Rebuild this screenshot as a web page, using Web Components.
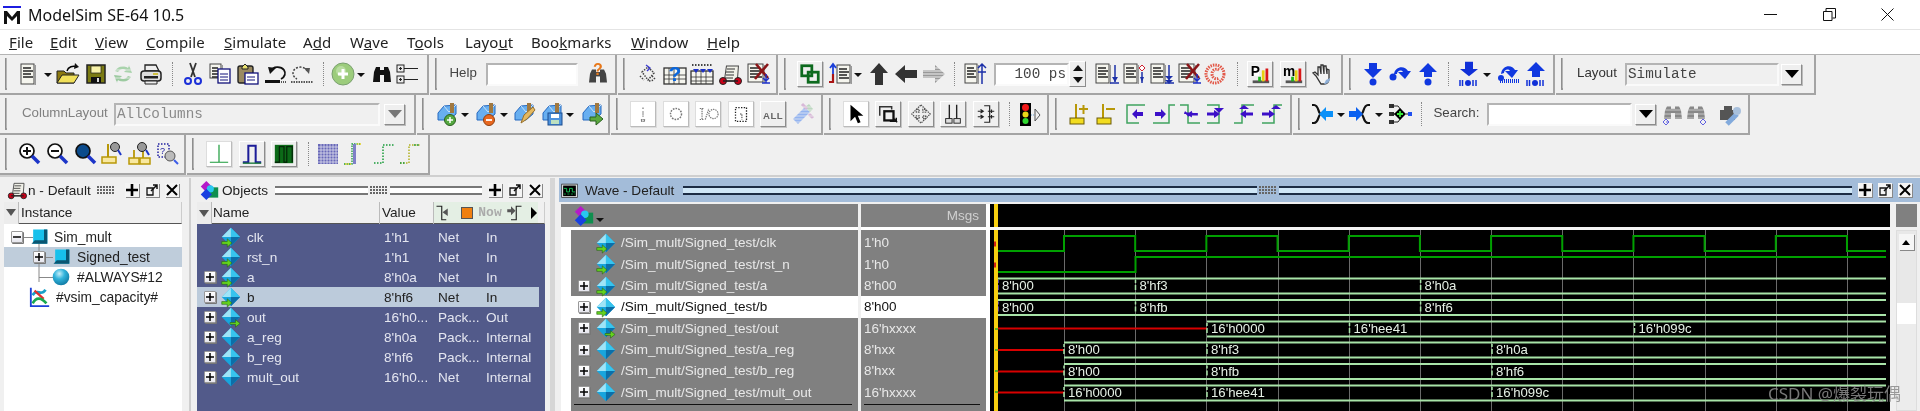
<!DOCTYPE html>
<html><head><meta charset="utf-8"><title>ModelSim</title>
<style>html,body{margin:0;padding:0;background:#f0f0f0;overflow:hidden}</style></head>
<body><ms-app></ms-app>
<script>
const F='"Noto Sans","Open Sans",sans-serif';
const F2='"Liberation Sans",Arial,sans-serif';
const diamond=(a)=>`<polygon points="13,2 23,12 13,22 3,12" fill="#18a5dd"/><polygon points="13,2 13,12 3,12" fill="#9fe4f7"/><polygon points="13,2 23,12 13,12" fill="#37c4ee"/><polygon points="13,22 23,12 13,12" fill="#0c6ea8"/>`+(a==='in'?`<path d="M3 17h6v-3l5 4.500-5 4.500v-3H3z" fill="#64d21e" stroke="#215a10" stroke-width=".6"/>`:a==='out'?`<path d="M12 18h6v-3l5 4-5 4v-3h-6z" fill="#64d21e" stroke="#215a10" stroke-width=".6"/>`:'');
const dbl=(d,c='#000',w=1.4,x='')=>`<path d="${d}" fill="none" stroke="${c}" stroke-width="${w}" ${x}/>`;
const paper=(x=4,y=3,w=12,h=18)=>`<rect x="${x}" y="${y}" width="${w}" height="${h}" fill="#f5f5ee" stroke="#444"/><rect x="${x+w+.5}" y="${y+1}" width="1.5" height="${h}" fill="#999"/><path d="M${x+2} ${y+4}h${w-5}M${x+2} ${y+7}h${w-3}M${x+2} ${y+10}h${w-5}M${x+2} ${y+13}h${w-3}" stroke="#222" stroke-width="1.300"/>`;
const magnify=(c)=>`<circle cx="10" cy="9" r="7" fill="${c}" stroke="#111" stroke-width="1.700"/><path d="M15 14l7 7" stroke="#1c35c8" stroke-width="3.500"/>`;
const edge=(d,a,ac='#3c10c8')=>`<path d="${d}" fill="none" stroke="#3fa35f" stroke-width="1.500"/><path d="${a}" fill="${ac}"/>`;
const stepdown=(c='#1030d8')=>`<path d="M8 1h8v9h5l-9 9-9-9h5z" fill="${c}" transform="translate(0,-1) scale(1 .8)"/>`;
const bars=`<path d="M3 18v6M5.500 18v6M16 18v6M19 18v6" stroke="#1030d8" stroke-width="1.500"/><circle cx="11" cy="21" r="3" fill="#1030d8"/>`;
const folderblue=`<path d="M3 11l6-7 12-1 0 9-7 6-11 0z" fill="#68aff0" stroke="#2568c0"/><path d="M9 4l5 6 7-7" fill="none" stroke="#c8e2fa"/><path d="M15 1h4v10h-4z" fill="#a07840"/>`;
const binocs=(c='#333',x='')=>`<g fill="${c}" ${x}><path d="M3 20l1-10 2-5h4v15zM14 5h4l2 5 1 10h-7z"/><rect x="10" y="8" width="4" height="5"/></g>`;
const I={
doc:paper(5,2,13,20),
open:`<path d="M1 21V9h7l2 2h8v10z" fill="#8d7a10" stroke="#222"/><path d="M1 21l5-8h17l-5 8z" fill="#f1e05a" stroke="#222"/>`+dbl('M11 9c1-4 6-6 10-4')+`<path d="M19 1l4 4-5 2z" fill="#111"/>`,
save:`<rect x="3" y="3" width="18" height="18" fill="#7b7b12" stroke="#222" stroke-width="1.500"/><rect x="7" y="4" width="10" height="7" fill="#f7f2a8" stroke="#222" stroke-width=".7"/><rect x="7" y="15" width="10" height="6" fill="#111"/><rect x="13" y="16" width="2" height="4" fill="#ddd"/>`,
refresh:`<path d="M4 9c3-5 9-6 13-3l1-3 3 8-8-1 2-2c-3-2-6-1-8 2z" fill="#a9d3ac"/><path d="M20 15c-3 5-9 6-13 3l-1 3-3-8 8 1-2 2c3 2 6 1 8-2z" fill="#9ccaa0"/><path d="M2 4h20M2 8h20M2 12h20M2 16h20M2 20h20" stroke="#f0f0f0" stroke-width=".8"/>`,
print:`<path d="M6 9V3h11l3 6z" fill="#eee" stroke="#222" stroke-width="1.300"/><rect x="2" y="9" width="20" height="10" rx="3" fill="#ddd" stroke="#222" stroke-width="1.500"/><rect x="5" y="14" width="14" height="2.500" fill="#222"/><rect x="14" y="11" width="5" height="2" fill="#d0c040"/><path d="M6 19h12v3H6z" fill="#eee" stroke="#222"/>`,
cut:`<path d="M9 1l5 14M15 1l-5 14" stroke="#333" stroke-width="1.800"/><circle cx="7" cy="19" r="3" fill="none" stroke="#1c30d8" stroke-width="2"/><circle cx="17" cy="19" r="3" fill="none" stroke="#1c30d8" stroke-width="2"/>`,
copy:paper(2,2,11,14)+`<rect x="10" y="7" width="12" height="14" fill="#fff" stroke="#12127a" stroke-width="1.300"/><path d="M12 12h8M12 15h8M12 18h8" stroke="#12127a"/>`,
paste:`<rect x="3" y="4" width="15" height="17" rx="2" fill="#9a8a60" stroke="#222" stroke-width="1.400"/><path d="M7 5l3-3 3 3v2H7z" fill="#e8e070" stroke="#222"/><rect x="10" y="11" width="13" height="11" fill="#fff" stroke="#12127a" stroke-width="1.300"/><path d="M12 15h8M12 18h8" stroke="#12127a"/>`,
undo:dbl('M7 9c2-5 10-5 13-1 2 3 1 7-3 9',"#111",1.800)+`<path d="M4 5l8 1-6 6z" fill="#111"/><rect x="1" y="18" width="15" height="3" fill="#111"/><path d="M17 20h6" stroke="#555" stroke-width="2" stroke-dasharray="1 1"/>`,
redo:dbl('M17 9c-2-5-10-5-13-1-2 3-1 7 3 9',"#444",1.500,'stroke-dasharray="2 1.500"')+`<path d="M20 6l-6 0 5 6z" fill="#555"/><path d="M1 20h22" stroke="#555" stroke-width="2" stroke-dasharray="1.500 1"/>`,
simadd:`<circle cx="12" cy="12" r="11" fill="#9ccc7c" stroke="#7aa070"/><circle cx="10" cy="9" r="5" fill="#b8dca0"/><path d="M12 7v10M7 12h10" stroke="#fff" stroke-width="3"/>`,
binoc:binocs('#111'),
tree:`<rect x="1" y="3" width="7" height="7" fill="#eee" stroke="#222"/><rect x="1" y="14" width="7" height="7" fill="#eee" stroke="#222"/><path d="M3 6.500h3M3 17.500h3M4.500 5v3M4.500 16v3M8 6.500h14M8 17.500h14" stroke="#222" stroke-width="1.200"/>`,
helpq:binocs('#444','transform="translate(0,3) scale(1 .88)"')+`<text x="7" y="13" font-family="Liberation Sans" font-weight="700" font-size="16" fill="#e8781a">?</text>`,
stepdots:`<g fill="none" stroke="#444" stroke-dasharray="1.500 1.200" stroke-width="1.500"><path d="M6 10l6-5 6 6-6 7z"/><path d="M4 14l4 4M13 19l5-1M16 14l3 3"/></g><path d="M10 3l4 3-3 3" stroke="#3c3cd0" stroke-width="1.400" fill="none"/>`,
cal:`<rect x="1" y="6" width="22" height="16" fill="#f5f5ee" stroke="#333" stroke-width="1.300"/><path d="M1 13h22M1 17h22M6 6v16M11 6v16M16 6v16" stroke="#333" stroke-width=".8"/><text x="12" y="19" text-anchor="middle" font-family="Liberation Sans" font-weight="700" font-size="21" fill="#0a66dc">?</text>`,
cal2:`<rect x="1" y="9" width="22" height="13" fill="#f5f5ee" stroke="#333" stroke-width="1.300"/><path d="M1 15h22M1 19h22M6 9v13M11 9v13M16 9v13" stroke="#333" stroke-width=".8"/><path d="M3 7l3 4 3-4zM10 7l3 4 3-4zM17 7l3 4 3-4z" fill="#1c30c8"/><path d="M2 3h20" stroke="#444" stroke-width="2" stroke-dasharray="1.500 1.500"/>`,
cart:`<path d="M6 4h12l1 15H6z" fill="#f0f0e8" stroke="#444" transform="skewX(-8) translate(3)"/><path d="M9 7h8M8 10h8M8 13h8M7 16h8" stroke="#333"/><circle cx="5" cy="19" r="3.500" fill="#c80018" stroke="#222"/><circle cx="20" cy="19" r="3.500" fill="#c80018" stroke="#222"/><path d="M5 19h15" stroke="#222" stroke-width="1.500"/>`,
delx:paper(2,2,15,18)+`<path d="M10 2l12 14M22 2L9 17" stroke="#8a1518" stroke-width="2.600"/><path d="M20 12v9M16 21h8M17 16l3 3 3-3" stroke="#1c30c8" stroke-width="1.400" fill="none"/>`,
link:`<rect x="3" y="3" width="11" height="11" fill="none" stroke="#0d6a1e" stroke-width="3"/><rect x="10" y="10" width="11" height="11" fill="none" stroke="#0d6a1e" stroke-width="3"/>`,
updown:paper(9,3,13,18)+`<path d="M5 3v9M2 6l3-4 3 4" fill="none" stroke="#1c40d8" stroke-width="1.800"/><path d="M5 12v8H1" fill="none" stroke="#aa1515" stroke-width="2.200"/>`,
up:`<path d="M12 1l9 10h-5v12H8V11H3z" fill="#333"/>`,
left:`<path d="M1 12l10-9v5h12v8H11v5z" fill="#333"/>`,
right:`<path d="M23 12L13 3v5H1v8h12v5z" fill="#999"/><path d="M1 6h22M1 9h22M1 12h22M1 15h22M1 18h22" stroke="#f0f0f0"/>`,
wu:paper(2,2,12,19)+`<path d="M19 22V3M15 6l4-4 4 4M15 10h8" fill="none" stroke="#1c30a8" stroke-width="1.500"/>`,
w1:paper(1,2,13,19)+`<path d="M20 3v17M15 21h9" stroke="#1c30a8" stroke-width="1.500"/><path d="M17 15l3 5 3-5z" fill="#1c30a8"/>`,
w2:paper(1,2,13,19)+`<path d="M19 10v11" stroke="#1c30a8" stroke-width="1.500"/><path d="M17 15l2 5 2-5z" fill="#1c30a8"/><path d="M19 3l3 3-3 3-3-3z" fill="#fff" stroke="#d02030"/>`,
w3:paper(1,2,13,19)+`<path d="M19 3v15M15 21h9" stroke="#1c30a8" stroke-width="1.500"/><path d="M15 14l4 4 4-4zM15 18l4 4 4-4z" fill="#1c30a8"/>`,
redc:`<g fill="none" stroke="#e25848" stroke-width="3" stroke-dasharray="1.500 1"><circle cx="12" cy="12" r="9"/><path d="M16 8c-3-2-7 0-7 4s4 6 7 4"/></g>`,
prof:`<rect x="4" y="19" width="18" height="3" fill="#555"/><path d="M3 3h8v11H3z" fill="#fff"/><text x="2" y="14" font-family="Liberation Sans" font-weight="700" font-size="15" fill="#000">P</text><rect x="10" y="15" width="3" height="5" fill="#1cb41c"/><rect x="14" y="8" width="3" height="12" fill="#e8d010"/><rect x="18" y="6" width="3" height="14" fill="#d81818"/>`,
prom:`<rect x="4" y="19" width="18" height="3" fill="#555"/><text x="1" y="14" font-family="Liberation Sans" font-weight="700" font-size="15" fill="#000">m</text><rect x="10" y="15" width="3" height="5" fill="#1cb41c"/><rect x="14" y="8" width="3" height="12" fill="#e8d010"/><rect x="18" y="6" width="3" height="14" fill="#d81818"/>`,
handi:`<path d="M6 14l-3-3 2-1 3 3V5l2 0 1 7V3l2 0 1 9V4l2 0 1 8V7l2 1v8c0 4-2 6-5 6h-3z" fill="#f3f3f3" stroke="#333" stroke-width="1.300"/><path d="M14 22c3 0 6-2 6-6l-4 2z" fill="#8fb0d8"/>`,
sdown:`<path d="M8 1h8v6h5l-9 9-9-9h5z" fill="#1038e0"/><circle cx="12" cy="20" r="3.500" fill="#1038e0"/>`,
sover:`<path d="M6 12C7 4 17 3 20 9h3l-6 8-7-7h5c-2-3-6-1-6 2z" fill="#1038e0"/><circle cx="5" cy="15" r="3.500" fill="#1038e0"/>`,
sup:`<path d="M12 1l9 9h-5v5H8v-5H3z" fill="#1038e0"/><circle cx="12" cy="20" r="3.500" fill="#1038e0"/>`,
sdownb:stepdown()+bars,
soverb:`<path d="M5 12C6 3 16 2 19 8h3l-6 8-7-7h5c-2-3-6-1-6 2z" fill="#1038e0"/><circle cx="5" cy="16" r="3" fill="#1038e0"/><path d="M4 19h20" stroke="#1038e0" stroke-width="4" stroke-dasharray="1 1"/>`,
supb:`<path d="M12 0l9 9h-5v6H8V9H3z" fill="#1038e0"/>`+bars,
wadd:folderblue+`<circle cx="15" cy="18" r="5.500" fill="#55a840" stroke="#2a6020"/><path d="M15 15v6M12 18h6" stroke="#fff" stroke-width="1.500"/>`,
wsub:folderblue+`<circle cx="15" cy="18" r="5.500" fill="#e86820" stroke="#904010"/><path d="M12 18h6" stroke="#fff" stroke-width="1.800"/>`,
wedit:folderblue+`<path d="M9 21l3-8 9-8 2 3-8 9z" fill="#e4b860" stroke="#98702c"/>`,
wsave:folderblue+`<rect x="8" y="11" width="14" height="12" fill="#4d92dc" stroke="#1a4c90"/><rect x="11" y="12" width="8" height="4" fill="#fff"/><rect x="11" y="18" width="8" height="4" fill="#bde0c0"/>`,
wgo:folderblue+`<path d="M10 15h6v-4l7 6-7 6v-4h-6z" fill="#5ba83e" stroke="#2a6020"/>`,
t_i:`<path d="M12 5v2M12 9v6M10 18h4M10 20h4M10 18l1 2M14 18l-1 2" stroke="#777" stroke-width="1.300" stroke-dasharray="1.500 .8"/>`,
t_o:`<circle cx="12" cy="12" r="6" fill="none" stroke="#777" stroke-width="1.600" stroke-dasharray="1.800 1.200"/>`,
t_io:`<g fill="none" stroke="#777" stroke-width="1.300" stroke-dasharray="1.500 1"><path d="M3 6h5M5.500 6v12M3 18h5M9 18l4-12"/><circle cx="18" cy="12" r="5"/></g>`,
t_b:`<path d="M6 5h12v15H6z" fill="none" stroke="#222" stroke-width="1.400" stroke-dasharray="1.500 1.500"/><path d="M11 12h2v6" fill="none" stroke="#222" stroke-dasharray="1.500 1"/>`,
t_all:`<text x="12" y="17" text-anchor="middle" font-family="Liberation Sans" font-weight="700" font-size="10.500" fill="#666" letter-spacing=".4">ALL</text>`,
t_tool:`<path d="M2 17l12-12 5 5-12 12z" fill="#94b4f0"/><path d="M14 5l4-3 4 5-3 3z" fill="#bcd8c0"/><path d="M11 2l5 5M18 12l4 4" stroke="#d8b8d8" stroke-width="3"/><path d="M1 5h23M1 8h23M1 11h23M1 14h23M1 17h23M1 20h23" stroke="#f0f0f0" stroke-width=".7"/>`,
arrowc:`<path d="M6 2v18l5-5 3 7 3-1-3-7h6z" fill="#000"/>`,
zoomr:`<path d="M3 14V4h13v3" fill="none" stroke="#333" stroke-width="1.600"/><rect x="8" y="9" width="10" height="10" fill="none" stroke="#111" stroke-width="2.500"/><path d="M14 20l7 0 0-4M18 17l4 4" stroke="#111" stroke-width="1.600" fill="none"/>`,
move:`<g fill="none" stroke="#555" stroke-width="1.400" stroke-dasharray="1.500 1"><path d="M12 2l5 5h-3v3h3V7l5 5-5 5v-3h-3v3h3l-5 5-5-5h3v-3H7v3l-5-5 5-5v3h3V7H7z"/></g>`,
cur2:`<path d="M8 2v16M16 2v16" stroke="#222" stroke-width="1.500"/><rect x="4" y="17" width="7" height="5" fill="#ddd" stroke="#222"/><rect x="13" y="17" width="7" height="5" fill="#ddd" stroke="#222"/>`,
lanes:`<path d="M10 3h6v18h-6" fill="none" stroke="#222" stroke-width="1.300"/><path d="M3 9h6M3 15h6M6 7l3 2-3 2M6 13l3 2-3 2M14 9h7M14 15h7M18 7v4M18 13v4" stroke="#222" stroke-width="1.300" fill="none"/>`,
traffic:`<rect x="3" y="1" width="11" height="23" fill="#000"/><circle cx="8.500" cy="5.500" r="3.500" fill="#f01818"/><circle cx="8.500" cy="12.500" r="3" fill="#e8d818"/><circle cx="8.500" cy="19" r="3" fill="#30d830"/><path d="M18 7l5 6-5 6z" fill="#f0f0f0" stroke="#555"/><path d="M14 13h4" stroke="#6aa0d0" stroke-dasharray="1 1"/>`,
c_add:`<path d="M8 2v15M3 20h11" stroke="#b89808" stroke-width="2"/><rect x="2" y="16" width="14" height="6" fill="#f2dc20" stroke="#6a5a08"/><path d="M11 7h9M15.500 3v9" stroke="#b89808" stroke-width="2"/>`,
c_sub:`<path d="M8 2v15" stroke="#b89808" stroke-width="2"/><rect x="2" y="16" width="14" height="6" fill="#f2dc20" stroke="#6a5a08"/><path d="M11 7h9" stroke="#b89808" stroke-width="2"/>`,
e1:edge('M22 3H4v18h12','M9 12l5-5v3h6v4h-6v3z'),
e2:edge('M2 21h16V3h6','M15 12l-5-5v3H4v4h6v3z'),
e3:edge('M2 3h8v18h12','M6 12h4l-3-3z')+`<path d="M8 12l6-4v2.500h7v3h-7v2.500zM5 10h10l-5 5z" fill="#3c10c8" transform="translate(2,2) scale(.85)"/>`,
e4:edge('M2 21h12V3H2','M2 10.500h7V8l6 4-6 4v-2.500H2z')+`<path d="M9 3h10l-5 5z" fill="#3c10c8" transform="translate(0,3)"/>`,
e5:edge('M2 21h8V3h12','M21 10.500h-7V8l-6 4 6 4v-2.500h7z')+`<path d="M5 5l5-4 5 4z" fill="#3c10c8" transform="translate(2,2)"/>`,
e6:edge('M2 21h12V3h8','M2 10.500h7V8l6 4-6 4v-2.500H2z')+`<path d="M9 5l5-4 5 4z" fill="#3c10c8" transform="translate(2,2)"/>`,
out1:dbl('M2 3h2c5 0 4 9 7 9-3 0-2 9-7 9H2',"#111",2.200)+`<path d="M23 9v6h-7v4l-7-7 7-7v4z" fill="#0a90f8"/>`,
in1:dbl('M22 3h-2c-5 0-4 9-7 9 3 0 2 9 7 9h2',"#111",2.200)+`<path d="M1 9v6h7v4l7-7-7-7v4z" fill="#0a60f0"/>`,
nets:`<rect x="1" y="2" width="5" height="4" fill="#333"/><rect x="1" y="10" width="5" height="4" fill="#333"/><rect x="1" y="18" width="5" height="4" fill="#333"/><path d="M4 4h6l3 4M4 12h3M4 20h6l3-4M18 12h3" stroke="#222" fill="none"/><path d="M12 6l6 6-6 6-6-6z" fill="#000"/><path d="M12 9v6M9 12h6" stroke="#38e838" stroke-width="1.800"/><rect x="20" y="10" width="4" height="4" fill="#2050f0"/>`,
bfind1:binocs('#888','transform="scale(1 .85)"')+`<path d="M0 12h24M0 8h24M0 4h24M0 16h24" stroke="#f0f0f0" stroke-width=".6"/><path d="M2 20l3-3 3 3-3 3zM8 20h-3" fill="none" stroke="#6060e0"/>`,
bfind2:binocs('#888','transform="scale(1 .85)"')+`<path d="M0 12h24M0 8h24M0 4h24M0 16h24" stroke="#f0f0f0" stroke-width=".6"/><path d="M16 20l3-3 3 3-3 3z" fill="none" stroke="#6060e0"/>`,
gear:`<path d="M3 8h4V4h8v4h3v10H3z" fill="#555"/><path d="M10 22l10-10" stroke="#82aadc" stroke-width="5"/><circle cx="20" cy="9" r="4" fill="#a8c0dc"/>`,
z_in:magnify('#fff')+`<path d="M6 9h8M10 5v8" stroke="#111" stroke-width="2"/>`,
z_out:magnify('#fff')+`<path d="M6 9h8" stroke="#111" stroke-width="2"/>`,
z_full:magnify('#0b4b8c'),
cz1:`<path d="M8 2v13" stroke="#b89808" stroke-width="2"/><rect x="2" y="15" width="14" height="6" fill="#f8e8a0" stroke="#b89808" stroke-width="1.500"/><circle cx="15" cy="5" r="4.500" fill="#999" stroke="#222"/><path d="M18 8l3 5" stroke="#1c35c8" stroke-width="2"/>`,
cz2:`<path d="M6 8v8M15 4v12" stroke="#b89808" stroke-width="1.800"/><rect x="1" y="16" width="10" height="6" fill="#f8e8a0" stroke="#b89808" stroke-width="1.500"/><rect x="12" y="16" width="10" height="6" fill="#f8e8a0" stroke="#b89808" stroke-width="1.500"/><circle cx="14" cy="5" r="4.500" fill="#999" stroke="#222"/><path d="M18 8l3 5" stroke="#1c35c8" stroke-width="2"/>`,
cz3:`<path d="M2 2h11v13H2z" fill="none" stroke="#2020a0" stroke-width="1.500" stroke-dasharray="1.500 1.500"/><circle cx="14" cy="14" r="5" fill="#bbb" stroke="#555"/><path d="M18 18l4 4" stroke="#3c5ce8" stroke-width="2"/><text x="4" y="12" font-family="Liberation Sans" font-size="9" fill="#2020a0">?</text>`,
w_a:`<path d="M2 21h20M12 21V2" stroke="#1a9a3a" stroke-width="1.300" fill="none"/>`,
w_b:`<path d="M2 21h6V3h8v18h6" stroke="#1c1c98" stroke-width="2.200" fill="none"/><path d="M2 22h20" stroke="#1a7a3a" stroke-width="1.500"/>`,
w_c:`<rect x="2" y="2" width="20" height="20" fill="#0c6a18"/><path d="M2 21h5V4h5v17h3V4h6v17" stroke="#042a08" stroke-width="1.400" fill="none"/>`,
w_d:`<rect x="2" y="2" width="20" height="20" fill="#6868b8"/><path d="M2 5h20M2 8h20M2 11h20M2 14h20M2 17h20M2 20h20M5 2v20M8 2v20M11 2v20M14 2v20M17 2v20M20 2v20" stroke="#eeeef4" stroke-width=".7"/>`,
w_e:`<path d="M1 22h8V2h8" fill="none" stroke="#1a9a3a" stroke-dasharray="1.500 1" stroke-width="1.300"/><path d="M10 2h3v20h-3z" fill="#8080c8"/><path d="M2 22h6M14 2h5" stroke="#e0d020" stroke-width="1.500" stroke-dasharray="1.500 1"/>`,
w_f:`<path d="M2 21h9V3h11" fill="none" stroke="#1a9a3a" stroke-width="1.500" stroke-dasharray="1.500 1.500"/>`,
w_g:`<path d="M2 21h9V3h11" fill="none" stroke="#b0b020" stroke-width="1.500" stroke-dasharray="1.500 1.500"/><path d="M2 21h6M16 3h6" stroke="#1a9a3a" stroke-width="1.500" stroke-dasharray="1.500 1.500"/>`,
objs:`<rect x="3" y="2" width="10" height="10" fill="#b51ac8" transform="rotate(45 8 7)"/><rect x="9" y="8" width="14" height="13" fill="#0f8f4f"/><circle cx="13" cy="10" r="4.500" fill="#28c8f0"/><rect x="3" y="12" width="10" height="10" fill="#1840e0" transform="rotate(45 8 17)"/>`,
wavei:`<rect x="1" y="3" width="22" height="19" fill="#e8e8e8" stroke="#222"/><rect x="3" y="5" width="18" height="15" fill="#000"/><path d="M4 9h4v5h4V9h4v5h4" fill="none" stroke="#18c858" stroke-width="1.300"/><path d="M4 17h16" stroke="#18c858" stroke-dasharray="3 2"/>`,
cube:`<rect x="5" y="3" width="17" height="17" fill="#17c1ec"/><path d="M22 3v17H3l4-4h11V3z" fill="#0a5672"/>`,
sphere:`<circle cx="12" cy="12" r="10" fill="url(#sg)"/>`,
cap:`<path d="M2 2v20h20" stroke="#1c40d8" stroke-width="2" fill="none"/><path d="M4 10c5-8 9 2 14-6" stroke="#18a0c8" stroke-width="3" fill="none"/><path d="M6 5l10 9" stroke="#e03030" stroke-width="2.500"/><path d="M4 19c4-8 10-6 15 0" stroke="#18a850" stroke-width="3" fill="none"/>`,
sig:diamond(),sigin:diamond('in'),sigout:diamond('out')
};
function def(n,c){customElements.define(n,c)}
class Base extends HTMLElement{constructor(){super();this.attachShadow({mode:'open'})}}
def('ms-icon',class extends Base{connectedCallback(){const n=this.getAttribute('name'),s=+this.getAttribute('size')||24;
 this.shadowRoot.innerHTML=`<style>:host{display:inline-flex;align-items:center;justify-content:center;flex:none;box-sizing:border-box}
 svg{display:block;overflow:visible}
 :host([look=btn]){width:26px;height:26px;background:#efefef;border:1px solid;border-color:#fff #8c8c8c #8c8c8c #fff;box-shadow:1px 1px 0 #c4c4c4}
 :host([look=white]){width:26px;height:26px;background:#fff;border:1px solid;border-color:#ddd #bbb #bbb #ddd;box-shadow:1px 1px 0 #ddd}
 </style><svg width="${s}" height="${s}" viewBox="0 0 24 24"><defs><radialGradient id="sg" cx=".4" cy=".3" r=".8"><stop offset="0" stop-color="#c8eef8"/><stop offset=".4" stop-color="#32b4dc"/><stop offset="1" stop-color="#0a6e98"/></radialGradient></defs>${I[n]||''}</svg>`}});
def('ms-drop',class extends Base{constructor(){super();this.shadowRoot.innerHTML=`<style>:host{display:block;flex:none;width:0;height:0;border:4px solid transparent;border-top:4px solid #111;border-bottom:0;margin-top:2px}</style>`}});
def('ms-sep',class extends Base{constructor(){super();this.shadowRoot.innerHTML=`<style>:host{display:block;flex:none;width:0;height:24px;border-left:1.500px dotted #888}</style>`}});
def('ms-grip',class extends Base{constructor(){super();this.shadowRoot.innerHTML=`<style>:host{display:block;flex:none;width:2px;height:32px;margin-left:5px;background:#b4b4b4;border-left:1px solid #8e8e8e;border-bottom:2px solid #999;box-sizing:border-box}</style>`}});
def('ms-group',class extends Base{constructor(){super();this.shadowRoot.innerHTML=`<style>:host{display:flex;align-items:center;flex:none;box-sizing:border-box;height:100%;border-right:2px solid #a4a4a4;border-bottom:2px solid #a4a4a4;margin-right:1px;font:13.500px ${F2};color:#444}</style><slot></slot>`}});
def('ms-row',class extends Base{constructor(){super();this.shadowRoot.innerHTML=`<style>:host{display:flex;height:40px}</style><slot></slot>`}});
def('ms-label',class extends Base{constructor(){super();this.shadowRoot.innerHTML=`<style>:host{display:block;flex:none;white-space:nowrap;font:13.300px ${F2};line-height:20px;margin-top:-3px}</style><slot></slot>`}});
def('ms-field',class extends Base{connectedCallback(){const c=this.getAttribute('bg')||'#fff';this.shadowRoot.innerHTML=`<style>:host{display:flex;align-items:center;flex:none;box-sizing:border-box;height:23px;background:${c};border:2px solid;border-color:#b4b4b4 #fafafa #fafafa #b4b4b4;font:14.300px "Liberation Mono",monospace;padding:0 1px;white-space:nowrap;overflow:hidden}</style><slot></slot>`}});
def('ms-combo-btn',class extends Base{constructor(){super();this.shadowRoot.innerHTML=`<style>:host{display:flex;align-items:center;justify-content:center;flex:none;box-sizing:border-box;width:21px;height:21px;background:#efefef;border:1px solid;border-color:#fff #8c8c8c #8c8c8c #fff;box-shadow:1px 1px 0 #bbb}
 i{display:block;width:0;height:0;border:7px solid transparent;border-top:8px solid #000;border-bottom:0}:host([off]) i{border-top-color:#777}</style><i></i>`}});
def('ms-spin',class extends Base{constructor(){super();this.shadowRoot.innerHTML=`<style>:host{display:flex;flex-direction:column;flex:none;width:17px;height:26px;box-sizing:border-box;border:1px solid;border-color:#fff #8c8c8c #8c8c8c #fff;background:#efefef;align-items:center;justify-content:space-around}
 i{display:block;width:0;height:0;border:5px solid transparent}i.u{border-bottom:6px solid #111;border-top:0}i.d{border-top:6px solid #111;border-bottom:0}</style><i class="u"></i><i class="d"></i>`}});
def('ms-titlebar',class extends Base{constructor(){super();this.shadowRoot.innerHTML=`<style>:host{display:flex;align-items:center;height:29px;background:#fff;box-sizing:border-box;padding-left:3px;font:16px ${F};color:#111}
 .t{margin-left:7px;flex:1;white-space:nowrap}svg{display:block}.c{display:flex;margin-right:0}
 .c div{width:58.500px;display:flex;justify-content:center;align-items:center}</style>
 <svg width="18" height="20" viewBox="0 0 18 20"><rect y="1" width="18" height="2" fill="#1c1ce0"/><path d="M1 19V6h3l5 6 5-6h3v13h-3v-8l-5 5-5-5v8z" fill="#111"/></svg>
 <div class="t">ModelSim SE-64 10.5</div><div class="c"><div><svg width="13" height="13"><path d="M0 6.500h13" stroke="#111"/></svg></div><div><svg width="13" height="13"><path d="M.5 3.500h8.500v9H.5zM3 3V.500h9.500V10H9.500" fill="none" stroke="#111"/></svg></div><div style="margin-right:3px"><svg width="13" height="13"><path d="M.5.5l12 12M12.500.5l-12 12" stroke="#111"/></svg></div></div>`}});
def('ms-menubar',class extends Base{constructor(){super();const m=[['<u>F</u>ile',41],['<u>E</u>dit',45],['<u>V</u>iew',51],['<u>C</u>ompile',78],['<u>S</u>imulate',79],['A<u>d</u>d',47],['W<u>a</u>ve',57],['T<u>o</u>ols',58],['Layo<u>u</u>t',66],['Boo<u>k</u>marks',100],['<u>W</u>indow',76],['<u>H</u>elp',50]];
 this.shadowRoot.innerHTML=`<style>:host{display:flex;align-items:center;height:26px;box-sizing:border-box;background:#fff;border-top:1px solid #e4e4e4;border-bottom:1px solid #b4b4b4;padding-left:9px;font:15px ${F};color:#222}div{flex:none;white-space:nowrap;letter-spacing:.1px}</style>`+m.map(([t,w])=>`<div style="width:${w}px">${t}</div>`).join('')}});
function group(x0,x1,items){let cur=x0+7,h='';for(const it of items){const [x,tag,w,attrs='',body='']=it;const m=Math.round((x-w/2-cur)*10)/10;cur=x+w/2;
 const st=`margin-left:${m}px;`+(tag==='ms-icon'||tag==='ms-sep'||tag==='ms-drop'?'':`width:${w}px;`);h+=`<${tag} ${attrs} style="${st}">${body}</${tag}>`}
 return `<ms-group style="width:${x1-x0}px"><ms-grip></ms-grip>${h}</ms-group>`}
const ic=(x,n,s=24)=>[x,'ms-icon',s,`name="${n}" size="${s}"`];
const bt=(x,n,s=22,look='btn')=>[x,'ms-icon',26,`name="${n}" size="${s}" look="${look}"`];
const dr=x=>[x,'ms-drop',8];const sp=x=>[x,'ms-sep',1];
const lbl=(x,t,w,c='#444')=>[x,'ms-label',w,`class="l" `,`<span style="color:${c}">${t}</span>`];
const row1=[
 group(0,429,[ic(28,'doc'),dr(48),ic(68,'open'),ic(96,'save'),ic(123,'refresh'),ic(151,'print'),sp(172),ic(193,'cut'),ic(220,'copy'),ic(247,'paste'),ic(276,'undo'),ic(302,'redo'),sp(323),ic(343,'simadd'),dr(361),ic(382,'binoc'),ic(408,'tree')]),
 group(430,617,[lbl(464.500,'Help',30),[532,'ms-field',92],ic(598,'helpq')]),
 group(618,778,[ic(648,'stepdots'),ic(675,'cal'),ic(702,'cal2'),ic(730,'cart'),ic(758,'delx')]),
 group(779,1343,[bt(810,'link'),ic(840,'updown'),dr(858),ic(879,'up'),ic(906,'left'),ic(934,'right'),sp(954),ic(975,'wu'),[1031.500,'ms-field',75,'',`<span style="margin-left:auto;color:#444">100 ps</span>`],[1077.500,'ms-spin',17],ic(1107,'w1'),ic(1135,'w2'),ic(1162,'w3'),ic(1189,'delx'),ic(1215,'redc'),sp(1237),bt(1260,'prof'),bt(1293,'prom'),ic(1322,'handi')]),
 group(1344,1555,[ic(1373,'sdown'),ic(1400,'sover'),ic(1428,'sup'),sp(1448),ic(1469,'sdownb'),dr(1487),ic(1508,'soverb'),ic(1536,'supb')]),
 group(1556,1816,[lbl(1598,'Layout',42,'#333'),[1702,'ms-field',154,'bg="#f0f0f0"',`<span style="color:#444">Simulate</span>`],[1791.500,'ms-combo-btn',21]])
].join('');
const row2=[
 group(0,416,[lbl(64.500,'ColumnLayout',85,'#808080'),[247,'ms-field',266,'bg="#f0f0f0"',`<span style="color:#8a8a8a">AllColumns</span>`],[394.500,'ms-combo-btn',21,'off']]),
 group(417,610,[ic(447,'wadd'),dr(465),ic(486,'wsub'),dr(504),ic(524,'wedit'),ic(552,'wsave'),dr(570),ic(592,'wgo')]),
 group(611,823,[bt(643,'t_i',22,'white'),bt(676,'t_o',22,'white'),bt(708,'t_io',22,'white'),bt(741,'t_b',22,'white'),bt(773,'t_all'),ic(803,'t_tool')]),
 group(824,1049,[bt(856,'arrowc',22,'white'),bt(888,'zoomr'),bt(921,'move'),bt(953,'cur2'),bt(986,'lanes'),sp(1009),ic(1029,'traffic')]),
 group(1050,1292,[ic(1080,'c_add'),ic(1107,'c_sub'),ic(1135,'e1'),ic(1163,'e2'),ic(1190,'e3'),ic(1217,'e4'),ic(1244,'e5'),ic(1272,'e6')]),
 group(1293,1750,[ic(1322,'out1'),dr(1341),ic(1360,'in1'),dr(1379),ic(1400,'nets'),sp(1421),lbl(1456.500,'Search:',46,'#444'),[1559.500,'ms-field',145],[1645.500,'ms-combo-btn',21],ic(1673,'bfind1'),ic(1696,'bfind2'),ic(1729,'gear')])
].join('');
const row3=[
 group(0,186,[ic(29,'z_in'),ic(57,'z_out'),ic(85,'z_full'),ic(112,'cz1'),ic(140,'cz2'),ic(168,'cz3')]),
 group(187,430,[bt(219,'w_a',22,'white'),bt(252,'w_b'),bt(284,'w_c'),sp(308),ic(328,'w_d'),ic(355,'w_e'),ic(384,'w_f'),ic(410,'w_g')])
].join('');
def('ms-dock',class extends Base{constructor(){super();this.shadowRoot.innerHTML=`<style>:host{display:flex;gap:6px;flex:none;margin-left:6px}b{display:flex;width:14px;height:14px;background:#f4f4f4;box-shadow:1px 1px 0 #888;align-items:center;justify-content:center}</style>
 <b><svg width="12" height="12"><path d="M6 0v12M0 6h12" stroke="#000" stroke-width="2.600"/></svg></b><b><svg width="12" height="12"><path d="M1 4h6v7H1z" fill="none" stroke="#111" stroke-width="1.300"/><path d="M5 7l6-6M7 1h4v4" fill="none" stroke="#111" stroke-width="1.500"/></svg></b><b><svg width="12" height="12"><path d="M1 1l10 10M11 1L1 11" stroke="#000" stroke-width="2"/></svg></b>`}});
def('ms-ptitle',class extends Base{connectedCallback(){const lines=this.hasAttribute('lines'),dark=this.hasAttribute('active');
 this.shadowRoot.innerHTML=`<style>:host{display:flex;align-items:center;height:24px;font:13.600px ${F2};color:#222;box-sizing:border-box;white-space:nowrap}
 :host([active]){background:#a3bcd9;padding-right:8px}
 :host(:not([active])){padding-right:3px}
 .g{flex:1;display:flex;align-items:center;height:100%;gap:2px;min-width:0}
 .ln{flex:1;height:9px;border-top:2px solid ${dark?'#1c2c44':'#777'};border-bottom:2px solid ${dark?'#1c2c44':'#777'};background:${dark?'#cfe6f6':'#fff'};box-sizing:border-box}
 .dots{flex:none;width:18px;height:9px;background-image:radial-gradient(circle at 1px 1px,#666 .8px,transparent 1px);background-size:3px 3px}</style>
 <slot></slot><div class="g">${lines?'<div class="ln"></div>':''}<div class="dots"></div>${lines?'<div class="ln"></div>':''}</div><ms-dock></ms-dock>`}});
def('ms-chead',class extends Base{constructor(){super();this.shadowRoot.innerHTML=`<style>:host{display:flex;align-items:center;box-sizing:border-box;height:22px;background:#f0f0f0;border-bottom:1px solid #555;border-right:1px solid #ccc;font:13.600px ${F2};color:#222;padding-left:3px;flex:none}</style><slot></slot>`}});
def('ms-filter',class extends Base{constructor(){super();this.shadowRoot.innerHTML=`<style>:host{display:flex;flex:none;align-items:center;justify-content:center;width:15px;height:22px;box-sizing:border-box;background:#ececec;border-right:1px solid #bbb}
 i{display:block;width:0;height:0;border:5px solid transparent;border-top:7px solid #555;border-bottom:0}</style><i></i>`}});
def('ms-exp',class extends Base{connectedCallback(){const minus=this.hasAttribute('minus');this.shadowRoot.innerHTML=`<style>:host{display:flex;flex:none;width:12px;height:12px;box-sizing:border-box;background:linear-gradient(#fff,#e6e6ee);border:1px solid #999;box-shadow:1px 1px 0 #777;border-radius:1px;align-items:center;justify-content:center}</style>
 <svg width="8" height="8"><path d="M0 4h8${minus?'':'M4 0v8'}" stroke="#000" stroke-width="1.500"/></svg>`}});
def('ms-instance',class extends Base{constructor(){super();
 const r=(pad,kids,sel='')=>`<div class="r ${sel}" style="padding-left:${pad}px">${kids}</div>`;
 this.shadowRoot.innerHTML=`<style>:host{display:flex;flex-direction:column;width:178px;flex:none;height:233px;font:13.800px ${F2};color:#222}
 .b{flex:1;background:#fff;padding-top:3px;position:relative;overflow:hidden}
 .r{display:flex;align-items:center;height:20px;white-space:nowrap}.s{background:#bfcddb}
 .lab{flex:none}ms-icon{flex:none}svg.ov{position:absolute;left:0;top:0}</style>
 <ms-ptitle><div style="display:flex;align-items:center;width:93px;flex:none;padding-left:3px;box-sizing:border-box"><ms-icon name="cart" size="20"></ms-icon><span style="margin-left:1px;white-space:nowrap">n - Default</span></div></ms-ptitle>
 <ms-chead style="padding:0"><ms-filter></ms-filter><span style="margin-left:2px">Instance</span></ms-chead>
 <div class="b"><svg class="ov" width="178" height="120"><path d="M13 13.500h16M35 13v45M35 33.500h14M35 53.500h14" stroke="#888" fill="none"/></svg>
 ${r(7,`<ms-exp minus style="position:relative"></ms-exp><ms-icon name="cube" size="20" style="margin-left:6px;position:relative"></ms-icon><span class="lab" style="margin-left:5px">Sim_mult</span>`)}
 ${r(29,`<ms-exp style="position:relative"></ms-exp><ms-icon name="cube" size="20" style="margin-left:6px;position:relative"></ms-icon><span class="lab" style="margin-left:6px">Signed_test</span>`,'s')}
 ${r(47,`<ms-icon name="sphere" size="20" style="position:relative"></ms-icon><span class="lab" style="margin-left:6px">#ALWAYS#12</span>`)}
 ${r(25,`<ms-icon name="cap" size="22"></ms-icon><span class="lab" style="margin-left:5px">#vsim_capacity#</span>`)}
 </div>`}});
def('ms-objects',class extends Base{constructor(){super();
 const d=[['clk',"1'h1",'Net','In','sigin',0],['rst_n',"1'h1",'Net','In','sigin',0],['a',"8'h0a",'Net','In','sigin',1],['b',"8'hf6",'Net','In','sigin',1],['out',"16'h0...",'Pack...','Out','sigout',1],['a_reg',"8'h0a",'Pack...','Internal','sig',1],['b_reg',"8'hf6",'Pack...','Internal','sig',1],['mult_out',"16'h0...",'Net','Internal','sig',1]];
 this.shadowRoot.innerHTML=`<style>:host{display:flex;flex-direction:column;width:348px;flex:none;height:233px;font:13.600px ${F2};color:#222}
 .b{flex:1;background:#525a8a;padding-top:3px;overflow:hidden;color:#e4e6f0}
 .r{display:grid;grid-template-columns:50px 137px 54px 48px 1fr;align-items:center;height:20px;white-space:nowrap;width:342px}
 .r.s{background:#bccbdb;color:#222}
 .n{display:flex;align-items:center;padding-left:7px;height:20px;box-sizing:border-box}
 .hd{display:grid;grid-template-columns:15px 168px 54px 1fr}
 .tb{display:flex;align-items:center;background:#e4efe4;height:21px;margin-right:6px;font:700 13px "Liberation Mono",monospace;color:#aaa;white-space:nowrap}
 .tb span{display:block;text-align:center}.or{display:inline-block;width:10px;height:10px;background:#f08010;border:1px solid #555}</style>
 <ms-ptitle lines><div style="display:flex;align-items:center;width:78px;flex:none;padding-left:3px;box-sizing:border-box"><ms-icon name="objs" size="19"></ms-icon><span style="margin-left:3px">Objects</span></div></ms-ptitle>
 <ms-chead style="padding:0;display:block"><div class="hd"><ms-filter></ms-filter><span style="line-height:21px;padding-left:1px;border-right:1px solid #bbb">Name</span><span style="line-height:21px;padding-left:2px;border-right:1px solid #bbb">Value</span>
 <div class="tb"><svg width="20" height="18" viewBox="0 0 24 24"><path d="M2 3h7v18h6" fill="none" stroke="#222" stroke-width="1.500"/><path d="M10 11l7-5v10z" fill="#555"/></svg><i class="or" style="margin-left:7px"></i><span style="margin-left:3px;width:28px">Now</span><svg width="20" height="18" viewBox="0 0 24 24"><path d="M8 21h7V3h7" fill="none" stroke="#222" stroke-width="1.500"/><path d="M3 7h5V3l6 6-6 6v-4H3z" fill="#555"/></svg><svg style="margin-left:auto" width="8" height="14"><path d="M1 1l6 6-6 6z" fill="#000"/></svg></div></div></ms-chead>
 <div class="b">${d.map((x,i)=>`<div class="r ${i==3?'s':''}"><div class="n">${x[5]?'<ms-exp></ms-exp>':'<span style="width:12px"></span>'}<ms-icon name="${x[4]}" size="22" style="margin-left:3px"></ms-icon></div><span>${x[0]}</span><span>${x[1]}</span><span>${x[2]}</span><span>${x[3]}</span></div>`).join('')}</div>`}});
function waveSvg(){
 const H=71.18,X0=1064;let grid='';for(let i=0;i<12;i++){const x=Math.round(X0+i*H)+.5;grid+=`<path d="M${x} 230V411" stroke="#6a6a6a"/>`}
 let clk='M998 251H1064';let hi=true;for(let i=0;i<12;i++){const x=X0+i*H,nx=Math.min(X0+(i+1)*H,1886);clk+=`V${hi?236:251}H${nx}`;hi=!hi}
 const bus=(t,b,from,tr,col='#a8e4a8')=>{const to=1886;let s=`<path d="M${from} ${t+.5}H${to}M${from} ${b+.5}H${to}" stroke="${col}" stroke-width="2" fill="none"/>`;
  for(const [x,l] of tr){const lc=x===998?'#6a4ad0':col;s+=`<path d="M${x} ${t+2}V${b-1}" stroke="${lc}" stroke-width="1.500" stroke-dasharray="3 2 5 2 3"/><text x="${x+4}" y="${b-2.800}" font-size="13.200" fill="#e6f0e6">${l}</text>`}return s};
 const red=(y,to)=>`<path d="M998 ${y}H${to}" stroke="#d80000" stroke-width="1.800"/>`;
 const T=[1135.500,1420.600,1207,1349.500,1634.500,1064,1492];
 return `<svg width="900" height="207" viewBox="990 204 900 207" style="display:block;font-family:${F2}">
 <rect x="990" y="204" width="900" height="207" fill="#000"/><rect x="990" y="227" width="900" height="3" fill="#f4f4f4"/>
 ${grid}
 <path d="${clk}" fill="none" stroke="#00a000" stroke-width="2"/>
 <path d="M998 272H1135.500V257H1886" fill="none" stroke="#00a000" stroke-width="2"/>
 ${bus(278,293,998,[[998,"8'h00"],[T[0],"8'hf3"],[T[1],"8'h0a"]])}
 ${bus(299.500,314.500,998,[[998,"8'h00"],[T[0],"8'hfb"],[T[1],"8'hf6"]])}
 ${red(328.500,1207)}${bus(321,336,1207,[[T[2],"16'h0000"],[T[3],"16'hee41"],[T[4],"16'h099c"]])}
 ${red(350,1064)}${bus(342,357,1064,[[T[5],"8'h00"],[T[2],"8'hf3"],[T[6],"8'h0a"]])}
 ${red(371.500,1064)}${bus(363.500,378.500,1064,[[T[5],"8'h00"],[T[2],"8'hfb"],[T[6],"8'hf6"]])}
 ${red(392.500,1064)}${bus(385,400,1064,[[T[5],"16'h0000"],[T[2],"16'hee41"],[T[6],"16'h099c"]])}
 <rect x="994" y="204" width="4" height="23" fill="#f8cf10"/><rect x="994" y="230" width="4" height="181" fill="#f8cf10"/>
 <path d="M994 244h4M994 265h4" stroke="#d02010" stroke-width="5" stroke-dasharray="2 3"/><path d="M995 329h3M995 350h3M995 371h3M995 392h3" stroke="#30b030" stroke-width="1.500"/>
 </svg>`}
def('ms-wave',class extends Base{constructor(){super();
 const d=[['clk',"1'h0",'sigin',0],['rst_n',"1'h0",'sigin',0],['a',"8'h00",'sigin',1],['b',"8'h00",'sigin',1],['out',"16'hxxxx",'sigout',1],['a_reg',"8'hxx",'sig',1],['b_reg',"8'hxx",'sig',1],['mult_out',"16'hxxxx",'sig',1]];
 this.shadowRoot.innerHTML=`<style>:host{display:flex;flex-direction:column;flex:none;width:1361px;height:233px;font:13.500px ${F2};color:#e8e8e8;background:#f0f0f0;overflow:hidden;position:relative}
 .body{display:flex;margin:2px 0 0 2px;height:207px}
 .c{flex:none;display:flex;flex-direction:column;background:#fff}
 .hd{height:23px;background:#808080;margin-bottom:3px;flex:none;display:flex;align-items:center}
 .rows{flex:1;background:#808080;padding-top:2.300px;overflow:hidden}
 .r{height:21.330px;display:flex;align-items:center;white-space:nowrap;box-sizing:border-box}
 .r.s{background:#fff;color:#111}
 .n{padding-left:7px}
 .lin{height:1.500px;background:#111;margin:1px 6px 0 3px}
 .sb{flex:none;width:28px;margin-left:2px;display:flex;flex-direction:column;align-items:center}
 .th{width:21px;height:23px;background:#808080;flex:none;margin-bottom:3px}
 .tr{width:21px;flex:1;background:linear-gradient(#e8e8e8 0,#e8e8e8 40%,#fff 40%,#fff 52%,#ececec 52%);display:flex;flex-direction:column;align-items:center;padding-top:3px;border:1px solid #ddd;box-sizing:border-box}
 .up{width:15px;height:16px;background:#f6f6f6;box-shadow:1px 1px 0 #888;display:flex;align-items:center;justify-content:center}
 .up i{display:block;width:0;height:0;border:4px solid transparent;border-bottom:5px solid #000;border-top:0}
 .wm{position:absolute;left:1209px;top:202px;font:17px "Noto Sans","Noto Sans CJK SC",sans-serif;color:#8c8c8c;white-space:nowrap;opacity:.85}
 </style>
 <ms-ptitle active lines><div style="display:flex;align-items:center;width:124px;flex:none;padding-left:2px;box-sizing:border-box"><ms-icon name="wavei" size="17"></ms-icon><span style="margin-left:7px;white-space:nowrap">Wave - Default</span></div></ms-ptitle>
 <div class="body">
 <div class="c" style="width:297px"><div class="hd"><ms-icon name="objs" size="20" style="margin-left:13px"></ms-icon><ms-drop style="margin-left:2px;margin-top:9px"></ms-drop></div>
  <div class="rows" style="margin-left:10px">${d.map((x,i)=>`<div class="r ${i==3?'s':''}" ${i==3?'style="margin-left:-10px;padding-left:10px"':''}><div class="n" style="display:flex;align-items:center;width:50px;box-sizing:border-box">${x[3]?'<ms-exp></ms-exp>':'<span style="width:12px"></span>'}<ms-icon name="${x[2]}" size="22" style="margin-left:4px"></ms-icon></div><span>/Sim_mult/Signed_test/${x[0]}</span></div>`).join('')}<div class="lin"></div></div></div>
 <div class="c" style="width:125px;margin-left:3px"><div class="hd" style="justify-content:flex-end;padding-right:7px;color:#cfcfcf">Msgs</div>
  <div class="rows">${d.map((x,i)=>`<div class="r ${i==3?'s':''}" style="padding-left:3px">${x[1]}</div>`).join('')}<div class="lin"></div></div></div>
 <div style="width:4px;flex:none;background:#fff"></div>
 ${waveSvg()}
 <div class="sb"><div class="th"></div><div class="tr"><div class="up"><i></i></div></div></div>
 </div><div class="wm">CSDN @爆裂玩偶</div>`}});
def('ms-panels',class extends Base{constructor(){super();this.shadowRoot.innerHTML=`<style>:host{display:flex;height:236px;box-sizing:border-box;background:#f0f0f0;border-top:2px solid #cfcfcf;padding:1px 0 0 4px;overflow:hidden}
 .v{flex:none;width:15px;display:flex;justify-content:center}.v i{display:block;width:2px;height:100%;background:#cfcfcf}</style>
 <ms-instance></ms-instance><div class="v"><i></i></div><ms-objects></ms-objects><div style="flex:none;width:14px;background:linear-gradient(90deg,#f0f0f0 5px,#d6d6d6 5px,#d6d6d6 10px,#f0f0f0 10px)"></div><ms-wave></ms-wave>`}});
def('ms-app',class extends Base{constructor(){super();this.shadowRoot.innerHTML=`<style>:host{display:block;width:1920px;height:411px;overflow:hidden;background:#f0f0f0;filter:blur(.35px)}</style>
 <ms-titlebar></ms-titlebar><ms-menubar></ms-menubar>
 <ms-row>${row1}</ms-row><ms-row>${row2}</ms-row><ms-row>${row3}</ms-row><ms-panels></ms-panels>`}});
</script></body></html>
